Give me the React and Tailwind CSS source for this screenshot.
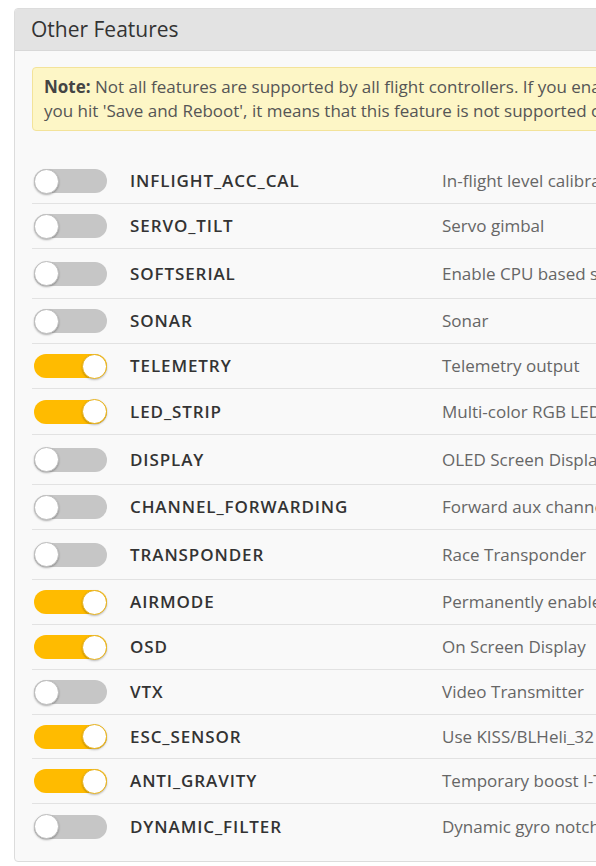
import React from "react";

const rows = [
  ["INFLIGHT_ACC_CAL", "In-flight level calibration", false, 45],
  ["SERVO_TILT", "Servo gimbal", false, 45],
  ["SOFTSERIAL", "Enable CPU based serial ports", false, 50],
  ["SONAR", "Sonar", false, 45],
  ["TELEMETRY", "Telemetry output", true, 45],
  ["LED_STRIP", "Multi-color RGB LED strip support", true, 46],
  ["DISPLAY", "OLED Screen Display", false, 50],
  ["CHANNEL_FORWARDING", "Forward aux channels to servo outputs", false, 45],
  ["TRANSPONDER", "Race Transponder", false, 50],
  ["AIRMODE", "Permanently enable AIRMODE", true, 45],
  ["OSD", "On Screen Display", true, 45],
  ["VTX", "Video Transmitter", false, 45],
  ["ESC_SENSOR", "Use KISS/BLHeli_32 ESC telemetry as sensor", true, 44],
  ["ANTI_GRAVITY", "Temporary boost I-Term on high throttle changes", true, 45],
  ["DYNAMIC_FILTER", "Dynamic gyro notch filtering", false, 45],
];

function Switch({ on }) {
  return (
    <div
      className={
        on
          ? "flex h-[24px] w-[73px] items-center justify-end rounded-full bg-[#ffbb00]"
          : "flex h-[24px] w-[73px] items-center justify-start rounded-full bg-[#c6c6c6]"
      }
    >
      <div
        className={
          on
            ? "h-[25px] w-[25px] rounded-full border border-[#e8b21a] bg-white shadow-[0_1px_2px_rgba(0,0,0,0.25)]"
            : "h-[25px] w-[25px] rounded-full border border-[#bdbdbd] bg-white shadow-[0_1px_2px_rgba(0,0,0,0.3)]"
        }
      />
    </div>
  );
}

export default function App() {
  return (
    <div
      className="h-[866px] w-[596px] overflow-hidden bg-white pt-[8px] pl-[14px]"
      style={{ fontFamily: "'Open Sans', 'Liberation Sans', sans-serif" }}
    >
      <div className="w-[1000px] overflow-hidden rounded-[4px] border border-[#dcdcdc] bg-[#f9f9f9]">
        <div className="flex h-[42px] items-center border-b border-[#d8d8d8] bg-[#e3e3e3] pl-[16px] text-[21px] font-medium text-[#333]">
          Other Features
        </div>
        <div className="px-[17px] pb-[12px] pt-[16px]">
          <div className="whitespace-nowrap rounded-[4px] border border-[#f3e39a] bg-[#fdf6c6] px-[11px] py-[7px] text-[17px] leading-[24px] text-[#555]">
            <span className="font-bold text-[#444]">Note:</span> Not all features are supported by all flight controllers. If you enable a specific feature, and it is disabled after
            <br />
            you hit 'Save and Reboot', it means that this feature is not supported on your board.
          </div>
          <div className="mt-[28px]">
            {rows.map(([name, desc, on, h], i) => (
              <div
                key={name}
                className={
                  i === rows.length - 1
                    ? "flex items-center"
                    : "flex items-center border-b border-[#e2e2e2]"
                }
                style={{ height: h }}
              >
                <div className="w-[98px] pl-[2px]">
                  <Switch on={on} />
                </div>
                <div className="w-[312px] text-[17px] font-semibold tracking-[0.9px] text-[#333]">
                  {name}
                </div>
                <div className="whitespace-nowrap text-[17px] text-[#666]">{desc}</div>
              </div>
            ))}
          </div>
        </div>
      </div>
    </div>
  );
}
